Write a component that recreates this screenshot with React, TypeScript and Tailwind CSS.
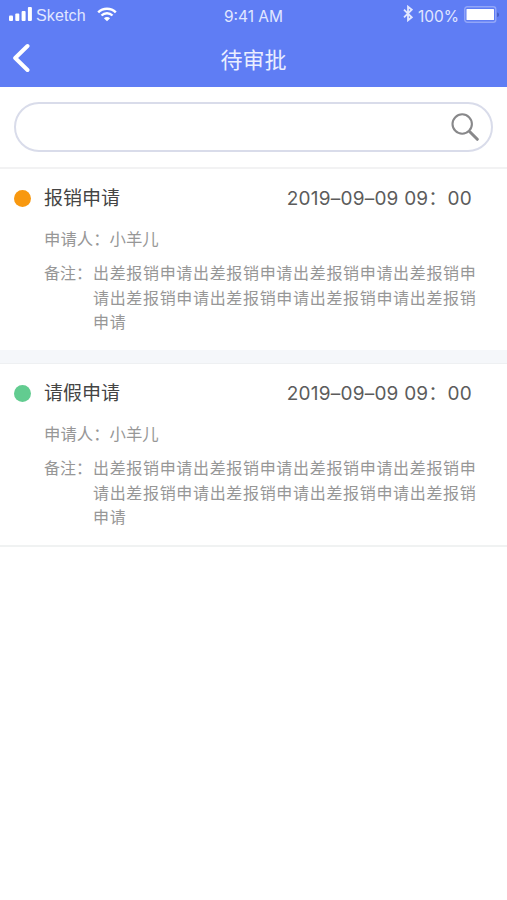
const approvals = [
  {
    id: 1,
    title: '报销申请',
    time: '2019–09–09 09：00',
    applicant: '小羊儿',
    remark: '出差报销申请出差报销申请出差报销申请出差报销申请出差报销申请出差报销申请出差报销申请出差报销申请',
    dot: 'bg-[#f8980f]',
  },
  {
    id: 2,
    title: '请假申请',
    time: '2019–09–09 09：00',
    applicant: '小羊儿',
    remark: '出差报销申请出差报销申请出差报销申请出差报销申请出差报销申请出差报销申请出差报销申请出差报销申请',
    dot: 'bg-[#62cc90]',
  },
];

function SignalIcon() {
  return (
    <svg className="w-[23px] h-[14px]" viewBox="0 0 23 14" fill="currentColor" aria-hidden="true">
      <rect x="0" y="8.5" width="4" height="5.5" rx="1" />
      <rect x="6.3" y="6.5" width="4" height="7.5" rx="1" />
      <rect x="12.6" y="4" width="4" height="10" rx="1" />
      <rect x="18.9" y="0" width="4" height="14" rx="1" />
    </svg>
  );
}

function WifiIcon() {
  return (
    <svg className="w-5 h-[15px]" viewBox="0 0 20 15" fill="none" stroke="currentColor" aria-hidden="true">
      <path d="M1.2 5.3C6 .5 14 .5 18.8 5.3" strokeWidth={2.5} />
      <path d="M4.5 8.5c3-3 8-3 11 0" strokeWidth={2.4} />
      <path d="M6.9 11.2c1.8-1.6 4.4-1.6 6.2 0L10 14.3z" fill="currentColor" stroke="none" />
    </svg>
  );
}

function BluetoothIcon() {
  return (
    <svg className="w-[10px] h-[17px]" viewBox="0 0 10 17" fill="none" stroke="currentColor" strokeWidth={1.8} aria-hidden="true">
      <path d="M1 4.7l7.7 7.6L5 15.3V1.7l3.7 3L1 12.3" />
    </svg>
  );
}

function BatteryIcon() {
  return (
    <svg className="w-9 h-[17px]" viewBox="0 0 36 17" aria-hidden="true">
      <rect x=".75" y=".75" width="31" height="15.5" rx="2.5" fill="none" stroke="#92a6f8" strokeWidth="1.4" />
      <rect x="2.5" y="3" width="27.5" height="11" rx=".5" fill="#fff" />
      <path d="M33.3 6.5c2 .5 2 4 0 4.5z" fill="#3c53b5" />
    </svg>
  );
}

function BackIcon() {
  return (
    <svg className="w-[18px] h-[30px]" viewBox="0 0 18 30" fill="none" stroke="currentColor" strokeWidth={4} strokeLinecap="round" strokeLinejoin="round" aria-hidden="true">
      <path d="M15.5 3L3.2 15l12.3 12" />
    </svg>
  );
}

function SearchIcon() {
  return (
    <svg className="w-7 h-7" viewBox="0 0 28 28" fill="none" stroke="#88888a" aria-hidden="true">
      <circle cx="11.2" cy="11" r="9.7" strokeWidth={2.1} />
      <path d="M18 18l2 2" strokeWidth={2} />
      <path d="M19.3 19.3l7 7" strokeWidth={3} strokeLinecap="round" />
    </svg>
  );
}

export default function App() {
  return (
    <div className="min-h-screen bg-white font-['Inter','Noto_Sans_CJK_SC',sans-serif]">
      <header className="h-[87px] bg-[#5f7df4] text-white">
        {/* Status bar */}
        <div className="h-8 grid grid-cols-3 items-center pl-[9px] pr-[7px] text-[15.5px] leading-none text-[#e1e7ff]">
          <div className="flex items-center">
            <div className="text-white -mt-1">
              <SignalIcon />
            </div>
            <span className="ml-1 font-['Liberation_Sans',sans-serif] text-base tracking-[0.15px]">Sketch</span>
            <div className="text-white ml-[11px] -mt-1">
              <WifiIcon />
            </div>
          </div>
          <span className="text-center pt-0.5 pr-0.5">9:41 AM</span>
          <div className="flex items-center justify-end">
            <div className="-mt-1.5">
              <BluetoothIcon />
            </div>
            <span className="mx-[5px] pt-0.5">100%</span>
            <div className="-mt-1">
              <BatteryIcon />
            </div>
          </div>
        </div>

        <div className="h-[55px] grid grid-cols-3 items-center px-3">
          <button type="button" aria-label="返回" className="w-[18px] -mt-1">
            <BackIcon />
          </button>
          <h1 className="text-center text-[22px] leading-[55px] pt-px font-normal text-[#eaeeff]">待审批</h1>
        </div>
      </header>

      <div className="h-[82px] border-b-2 border-[#f2f2f3] px-[14px] pt-[15px]">
        <div className="h-[50px] rounded-full border-2 border-[#d9dcea] flex items-center justify-end pr-3">
          <SearchIcon />
        </div>
      </div>

      <main>
        {approvals.map((item) => (
          <section
            key={item.id}
            className="h-[194px] px-[14px] pt-[13px] border-b-[13px] border-[#f5f7fa] last:h-[184px] last:border-t last:border-t-[#eef0f2] last:border-b-2 last:border-b-[#f0f2f2]"
          >
            <div className="h-8 flex items-center">
              <span className={`w-[17px] h-[17px] rounded-full ${item.dot}`} />
              <h2 className="ml-[13px] pt-[3px] text-[19px] font-normal text-[#444]">{item.title}</h2>
              <time className="ml-auto mr-[21px] pt-0.5 whitespace-nowrap text-[19px] tracking-[0.22px] text-[#5c5c5c]">
                {item.time}
              </time>
            </div>
            <p className="ml-[30px] mt-[13px] text-[16.4px] leading-6 text-[#979797]">
              申请人：{item.applicant}
            </p>
            <div className="ml-[30px] mt-[10px] flex text-[16px] leading-[24.5px] text-[#979797]">
              <span className="w-[49px] shrink-0 whitespace-nowrap">备注：</span>
              <p className="w-[386px] tracking-[0.67px] break-all">{item.remark}</p>
            </div>
          </section>
        ))}
      </main>
    </div>
  );
}
